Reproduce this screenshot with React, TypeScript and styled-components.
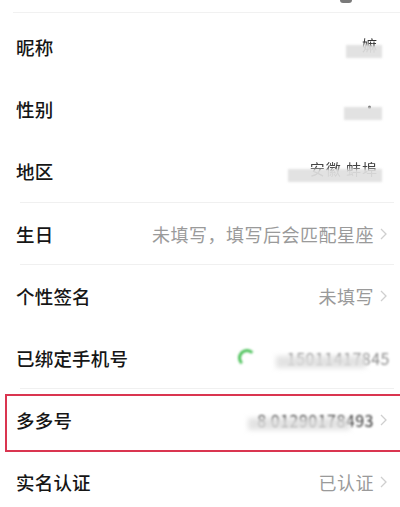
import React from 'react';
import styled, { createGlobalStyle } from 'styled-components';

const Global = createGlobalStyle`
  html, body {
    margin: 0;
    padding: 0;
    background: #ffffff;
  }
  body {
    font-family: "Noto Sans CJK SC", "Noto Sans", sans-serif;
    -webkit-font-smoothing: antialiased;
  }
`;

const Page = styled.div`
  width: 400px;
  height: 507px;
  overflow: hidden;
  background: #ffffff;
`;

const TopStrip = styled.div`
  height: 12px;
  margin-left: 13px;
  border-bottom: 1px solid #f1f1f1;
  display: flex;
  justify-content: flex-end;
  margin-bottom: 3px;
`;

const AvatarEdge = styled.span`
  width: 12px;
  height: 3px;
  margin-right: 48px;
  background: #7a7a7a;
  border-radius: 0 0 6px 6px;
  filter: blur(0.6px);
`;

const Row = styled.div<{ $line?: boolean }>`
  position: relative;
  height: 62.2px;
  display: flex;
  align-items: center;
  justify-content: space-between;
  padding: 0 10px 0 16px;
  box-sizing: border-box;
  &::after {
    content: '';
    position: absolute;
    left: 20px;
    right: 6px;
    bottom: 0;
    height: 1px;
    background: ${p => (p.$line ? '#f0f0f0' : 'transparent')};
  }
`;

const Label = styled.span`
  font-size: 18.5px;
  font-weight: 500;
  color: #161616;
  letter-spacing: 0.2px;
`;

const Right = styled.div`
  display: flex;
  align-items: center;
  gap: 6px;
`;

const Value = styled.span`
  font-size: 18px;
  color: #9a9a9a;
  letter-spacing: 0.5px;
`;

const Chevron = styled.svg`
  width: 7px;
  height: 12px;
  margin-right: 3px;
`;

const Mask = styled.span<{ $w: number; $dx?: number }>`
  position: relative;
  width: ${p => p.$w}px;
  height: 22px;
  margin-right: ${p => p.$dx ?? 0}px;
  display: flex;
  flex-direction: column;
  align-items: flex-end;
  justify-content: flex-end;
`;

const MaskBlock = styled.span`
  position: relative;
  z-index: 1;
  align-self: stretch;
  height: 13px;
  background: rgba(224, 224, 224, 0.92);
  filter: blur(1.2px);
`;

const MaskText = styled.span<{ $color: string }>`
  position: absolute;
  right: 4px;
  top: 1px;
  font-size: 15px;
  line-height: 15px;
  letter-spacing: 1px;
  color: ${p => p.$color};
  filter: blur(0.6px);
  white-space: nowrap;
`;

const Smudge = styled.span<{ $w: number }>`
  position: relative;
  width: ${p => p.$w}px;
  height: 22px;
  display: flex;
  align-items: center;
  justify-content: flex-end;
`;

const SmudgeText = styled.span<{ $color: string }>`
  font-size: 16px;
  letter-spacing: 0.5px;
  color: ${p => p.$color};
  filter: blur(1.1px);
  white-space: nowrap;
`;

const SmudgeCover = styled.span`
  position: absolute;
  left: 10px;
  right: 24px;
  top: 9px;
  height: 12px;
  background: rgba(222, 222, 222, 0.85);
  filter: blur(2.5px);
`;

const GreenMark = styled.span`
  width: 12px;
  height: 12px;
  border-radius: 50%;
  border: 3px solid #4cc25a;
  border-right-color: transparent;
  border-bottom-color: transparent;
  filter: blur(0.8px);
  margin-right: 4px;
  flex: none;
`;

const Highlight = styled.div`
  position: absolute;
  left: 5px;
  right: -12px;
  top: 5px;
  height: 58px;
  border: 2.5px solid #da3550;
  box-sizing: border-box;
  pointer-events: none;
`;

const Arrow = () => (
  <Chevron viewBox="0 0 7 12">
    <path d="M1 1l5 5-5 5" fill="none" stroke="#cfcfcf" strokeWidth="1.3" />
  </Chevron>
);

export default function App() {
  return (
    <Page>
      <Global />
      <TopStrip>
        <AvatarEdge />
      </TopStrip>

      <Row>
        <Label>昵称</Label>
        <Mask $w={36} $dx={8}>
          <MaskBlock />
          <MaskText $color="#333">嫲</MaskText>
        </Mask>
      </Row>

      <Row>
        <Label>性别</Label>
        <Mask $w={38} $dx={8}>
          <MaskBlock />
          <MaskText $color="#555">·</MaskText>
        </Mask>
      </Row>

      <Row $line>
        <Label>地区</Label>
        <Mask $w={94} $dx={8}>
          <MaskBlock />
          <MaskText $color="#444">安徽 蚌埠</MaskText>
        </Mask>
      </Row>

      <Row $line>
        <Label>生日</Label>
        <Right>
          <Value>未填写，填写后会匹配星座</Value>
          <Arrow />
        </Right>
      </Row>

      <Row>
        <Label>个性签名</Label>
        <Right>
          <Value>未填写</Value>
          <Arrow />
        </Right>
      </Row>

      <Row $line>
        <Label>已绑定手机号</Label>
        <Right>
          <GreenMark />
          <Smudge $w={124}>
            <SmudgeText $color="#8a8a8a">15011417845</SmudgeText>
            <SmudgeCover />
          </Smudge>
        </Right>
      </Row>

      <Row>
        <Label>多多号</Label>
        <Right>
          <Smudge $w={136}>
            <SmudgeText $color="#2a2a2a">8  01290178493</SmudgeText>
            <SmudgeCover />
          </Smudge>
          <Arrow />
        </Right>
        <Highlight />
      </Row>

      <Row>
        <Label>实名认证</Label>
        <Right>
          <Value>已认证</Value>
          <Arrow />
        </Right>
      </Row>
    </Page>
  );
}
